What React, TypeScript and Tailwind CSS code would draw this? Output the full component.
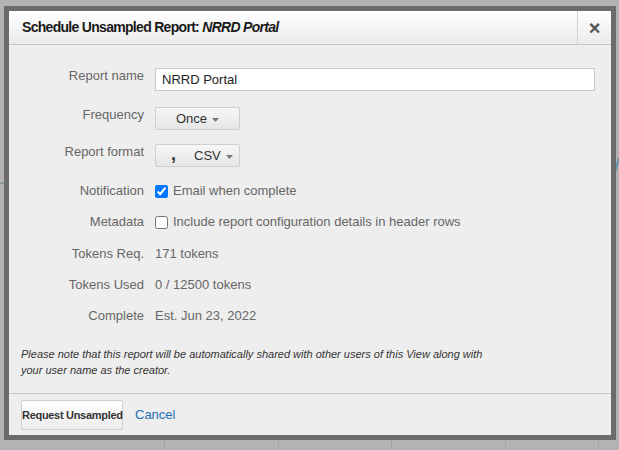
function Caret() {
  return (
    <svg width="7" height="4" viewBox="0 0 7 4" className="ml-[5px] mt-[2px]">
      <path d="M0 0h7L3.5 4z" fill="#777" />
    </svg>
  );
}

function Backdrop() {
  const rows = [32, 45, 80, 115, 205, 248, 267, 297, 345, 417, 430];
  const cols = [164, 278, 391, 505, 598];
  return (
    <svg className="absolute inset-0" width="619" height="450">
      {rows.map((y) => (
        <line key={y} x1="0" x2="619" y1={y + 0.5} y2={y + 0.5} stroke="#a9a9a9" />
      ))}
      {cols.map((x) => (
        <line key={x} x1={x + 0.5} x2={x + 0.5} y1="440" y2="450" stroke="#a3a3a3" />
      ))}
      <path d="M0 183h8" stroke="#8a9aa3" strokeWidth="2" />
      <path d="M612 183l7-25" stroke="#5d93ad" strokeWidth="2" fill="none" />
    </svg>
  );
}

type RowProps = {
  label: string;
  children: React.ReactNode;
  className?: string;
};

function Row({ label, children, className = "" }: RowProps) {
  return (
    <div className={`flex items-start ${className}`}>
      <div className="w-[135px] shrink-0 text-right leading-4 text-[#666]">{label}</div>
      <div className="ml-[11px] flex min-w-0 flex-1 items-center text-[#666]">{children}</div>
    </div>
  );
}

export default function App() {
  return (
    <div
      className="relative h-[450px] w-[619px] overflow-hidden bg-[#b3b3b3] pl-[4px] pt-[6px] text-[13px]"
      style={{ fontFamily: '"Liberation Sans", Arial, sans-serif' }}
    >
      <Backdrop />
      <div className="relative flex h-[434px] w-[612px] flex-col border-[5px] border-[#6b6b6b] bg-[#eeeeee]">
        {/* header */}
        <div className="flex h-[34px] shrink-0 border-b border-[#c6c6c6] bg-gradient-to-b from-white to-[#ebebeb]">
          <div className="flex flex-1 items-center pl-[13px] text-[14px] font-bold tracking-[-0.7px] text-[#1a1a1a]">
            Schedule Unsampled Report:&nbsp;<span className="italic">NRRD Portal</span>
          </div>
          <div className="flex w-[34px] items-center justify-center border-l border-[#d3d3d3] text-[20px] font-bold leading-none text-[#555]">
            ×
          </div>
        </div>

        {/* form */}
        <div className="flex flex-col pt-[23px]">
          <Row label="Report name">
            <div className="mr-[16px] flex h-[23px] flex-1 items-center border border-[#c9c9c9] bg-white px-[6px] text-[#222]">
              NRRD Portal
            </div>
          </Row>
          <Row label="Frequency" className="mt-[16px]">
            <div className="flex h-[23px] w-[85px] items-center justify-center rounded-[2px] border border-[#cfcfcf] bg-gradient-to-b from-[#f7f7f7] to-[#e6e6e6] text-[#333]">
              Once
              <Caret />
            </div>
          </Row>
          <Row label="Report format" className="mt-[14px]">
            <div className="flex h-[23px] w-[85px] items-center rounded-[2px] border border-[#cfcfcf] bg-gradient-to-b from-[#f7f7f7] to-[#e6e6e6] pl-[15px] text-[#333]">
              <span className="-mt-[4px] text-[18px] font-bold leading-none">,</span>
              <span className="ml-[18px]">CSV</span>
              <Caret />
            </div>
          </Row>
          <Row label="Notification" className="mt-[16px]">
            <input type="checkbox" defaultChecked className="m-0 h-[13px] w-[13px]" />
            <span className="ml-[5px] leading-4">Email when complete</span>
          </Row>
          <Row label="Metadata" className="mt-[15px]">
            <input type="checkbox" className="m-0 h-[13px] w-[13px]" />
            <span className="ml-[5px] leading-4">
              Include report configuration details in header rows
            </span>
          </Row>
          <Row label="Tokens Req." className="mt-[16px]">
            <span className="leading-4">171 tokens</span>
          </Row>
          <Row label="Tokens Used" className="mt-[15px]">
            <span className="leading-4">0 / 12500 tokens</span>
          </Row>
          <Row label="Complete" className="mt-[15px]">
            <span className="leading-4">Est. Jun 23, 2022</span>
          </Row>
          <p className="mt-[22px] w-[490px] pl-[12px] text-[11px] italic leading-4 text-[#333]">
            Please note that this report will be automatically shared with other users of this View along with
            your user name as the creator.
          </p>
        </div>

        {/* footer */}
        <div className="mt-auto flex items-center border-t border-[#c9c9c9] pb-[5px] pl-[12px] pt-[6px]">
          <button className="h-[30px] w-[102px] whitespace-nowrap rounded-[2px] border border-[#d0d0d0] bg-gradient-to-b from-white to-[#ececec] p-0 text-[11px] font-bold tracking-[-0.3px] text-[#333]">
            Request Unsampled
          </button>
          <span className="ml-[12px] text-[#1f6db5]">Cancel</span>
        </div>
      </div>
    </div>
  );
}
